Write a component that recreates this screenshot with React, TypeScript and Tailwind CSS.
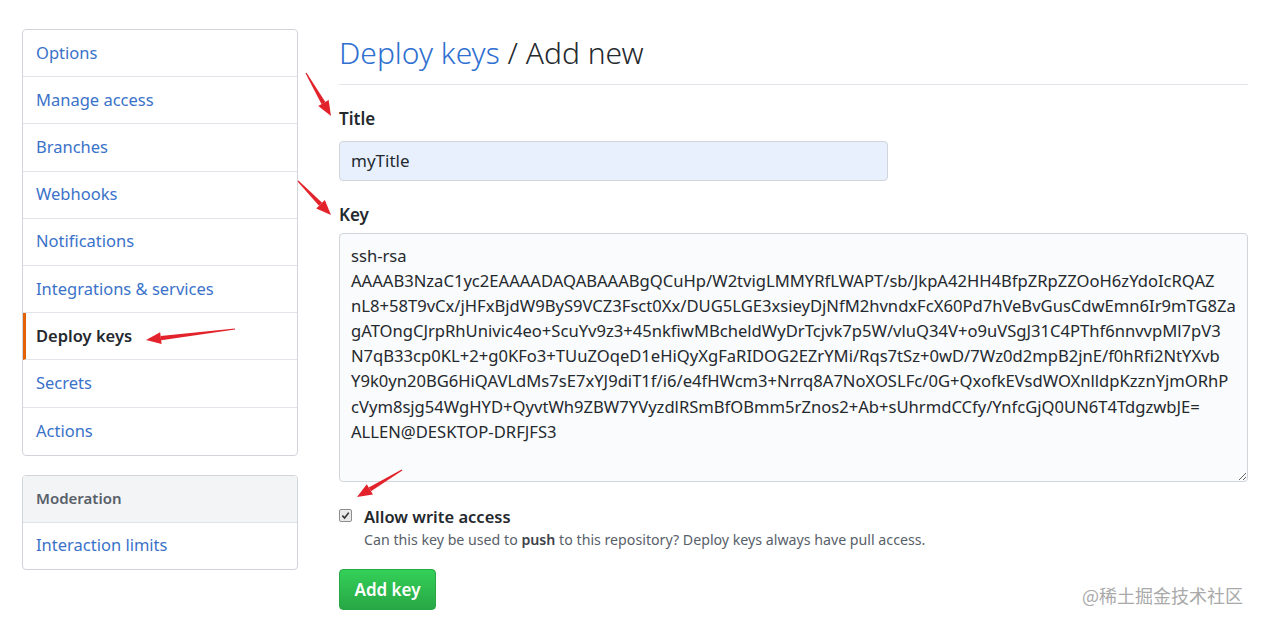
import React from "react"

const NAV = [
  "Options",
  "Manage access",
  "Branches",
  "Webhooks",
  "Notifications",
  "Integrations & services",
  "Deploy keys",
  "Secrets",
  "Actions",
]

const KEY_LINES = [
  "ssh-rsa",
  "AAAAB3NzaC1yc2EAAAADAQABAAABgQCuHp/W2tvigLMMYRfLWAPT/sb/JkpA42HH4BfpZRpZZOoH6zYdoIcRQAZ",
  "nL8+58T9vCx/jHFxBjdW9ByS9VCZ3Fsct0Xx/DUG5LGE3xsieyDjNfM2hvndxFcX60Pd7hVeBvGusCdwEmn6Ir9mTG8Za",
  "gATOngCJrpRhUnivic4eo+ScuYv9z3+45nkfiwMBcheldWyDrTcjvk7p5W/vluQ34V+o9uVSgJ31C4PThf6nnvvpMl7pV3",
  "N7qB33cp0KL+2+g0KFo3+TUuZOqeD1eHiQyXgFaRIDOG2EZrYMi/Rqs7tSz+0wD/7Wz0d2mpB2jnE/f0hRfi2NtYXvb",
  "Y9k0yn20BG6HiQAVLdMs7sE7xYJ9diT1f/i6/e4fHWcm3+Nrrq8A7NoXOSLFc/0G+QxofkEVsdWOXnlldpKzznYjmORhP",
  "cVym8sjg54WgHYD+QyvtWh9ZBW7YVyzdlRSmBfOBmm5rZnos2+Ab+sUhrmdCCfy/YnfcGjQ0UN6T4TdgzwbJE=",
  "ALLEN@DESKTOP-DRFJFS3",
]

const FONT = "font-['Noto_Sans','Open_Sans',sans-serif]"

function Sidebar() {
  return (
    <div className="w-[276px] shrink-0">
      <nav className="border border-[#d1d5da] rounded-[4px] bg-white overflow-hidden">
        {NAV.map((item, i) => {
          const active = item === "Deploy keys"
          return (
            <div
              key={item}
              className={`h-[47.2px] flex items-center text-[16.5px] ${
                i < NAV.length - 1 ? "border-b border-[#e1e4e8]" : ""
              } ${
                active
                  ? "border-l-[3px] border-l-[#e36209] pl-[10px] font-semibold text-[#24292e]"
                  : "pl-[13px] text-[#3a72c9]"
              }`}
            >
              {item}
            </div>
          )
        })}
      </nav>

      <nav className="mt-[19px] border border-[#d1d5da] rounded-[4px] bg-white overflow-hidden">
        <div className="h-[47px] flex items-center pl-[13px] bg-[#f3f4f6] border-b border-[#e1e4e8] text-[15px] font-semibold text-[#586069]">
          Moderation
        </div>
        <div className="h-[46px] flex items-center pl-[13px] text-[16.5px] text-[#3a72c9]">
          Interaction limits
        </div>
      </nav>
    </div>
  )
}

function Checkmark() {
  return (
    <span className="w-[13px] h-[13px] mt-[3px] shrink-0 rounded-[2px] border border-[#8f8f8f] bg-[#e9e9e9] flex items-center justify-center">
      <svg width="9" height="9" viewBox="0 0 10 10">
        <path d="M1.5 5.2 L4 7.8 L8.6 1.8" fill="none" stroke="#333" strokeWidth="1.8" />
      </svg>
    </span>
  )
}

function Arrows() {
  const red = "#e3232b"
  const arrow = (x1: number, y1: number, x2: number, y2: number) => {
    const a = Math.atan2(y2 - y1, x2 - x1)
    const len = 15
    const w = 6
    const bx = x2 - Math.cos(a) * len
    const by = y2 - Math.sin(a) * len
    const px = -Math.sin(a)
    const py = Math.cos(a)
    const head = `${x2},${y2} ${bx + px * w},${by + py * w} ${bx - px * w},${by - py * w}`
    const body = `${x1 + px * 0.6},${y1 + py * 0.6} ${bx + px * 2.2},${by + py * 2.2} ${bx - px * 2.2},${by - py * 2.2} ${x1 - px * 0.6},${y1 - py * 0.6}`
    return (
      <g fill={red}>
        <polygon points={body} />
        <polygon points={head} />
      </g>
    )
  }
  return (
    <svg className="absolute inset-0 pointer-events-none" width="1262" height="625">
      {arrow(306, 73, 331, 116)}
      {arrow(298, 181, 331, 215)}
      {arrow(235, 329, 146, 340)}
      {arrow(402, 470, 357, 497)}
    </svg>
  )
}

export default function App() {
  return (
    <div className={`relative w-[1262px] h-[625px] bg-white overflow-hidden ${FONT}`}>
      <div className="flex gap-[41px] pl-[22px] pt-[29px]">
        <Sidebar />

        <main className="w-[909px]">
          <div className="pt-[5px] pb-[13px] border-b border-[#e1e4e8]">
            <h2 className="text-[30px] leading-[37px] font-light text-[#24292e]">
              <span className="text-[#2e6fd0]">Deploy keys</span> / Add new
            </h2>
          </div>

          <label className="block mt-[23px] text-[17px] leading-[22px] font-semibold text-[#24292e]">
            Title
          </label>
          <div className="mt-[11px] w-[549px] h-[40px] rounded-[4px] border border-[#d1d5da] bg-[#e8f0fe] flex items-center px-[11px] text-[17px] text-[#24292e]">
            myTitle
          </div>

          <label className="block mt-[23px] text-[17px] leading-[22px] font-semibold text-[#24292e]">
            Key
          </label>
          <textarea
            readOnly
            wrap="off"
            value={KEY_LINES.join("\n")}
            className="block mt-[7px] w-full h-[249px] rounded-[4px] border border-[#d1d5da] bg-[#fafbfc] px-[11px] pt-[9px] pb-0 text-[16.6px] leading-[25.1px] text-[#24292e] overflow-hidden whitespace-pre resize-y outline-none"
          />

          <div className="mt-[24px] flex gap-[12px]">
            <Checkmark />
            <div>
              <div className="text-[16.5px] leading-[22px] font-semibold text-[#24292e]">
                Allow write access
              </div>
              <p className="mt-[2px] text-[14.2px] leading-[20px] text-[#586069]">
                Can this key be used to <b className="font-semibold text-[#3d4249]">push</b> to
                this repository? Deploy keys always have pull access.
              </p>
            </div>
          </div>

          <button className="block mt-[19px] w-[97px] h-[41px] rounded-[4px] border border-[#28a745] bg-gradient-to-b from-[#34d058] to-[#28a745] text-white text-[17px] font-semibold">
            Add key
          </button>
        </main>
      </div>

      <div className="absolute right-[19px] top-[582px] text-[18px] text-[#a9a9a9] font-['Noto_Sans_CJK_SC',sans-serif]">
        @稀土掘金技术社区
      </div>

      <Arrows />
    </div>
  )
}
